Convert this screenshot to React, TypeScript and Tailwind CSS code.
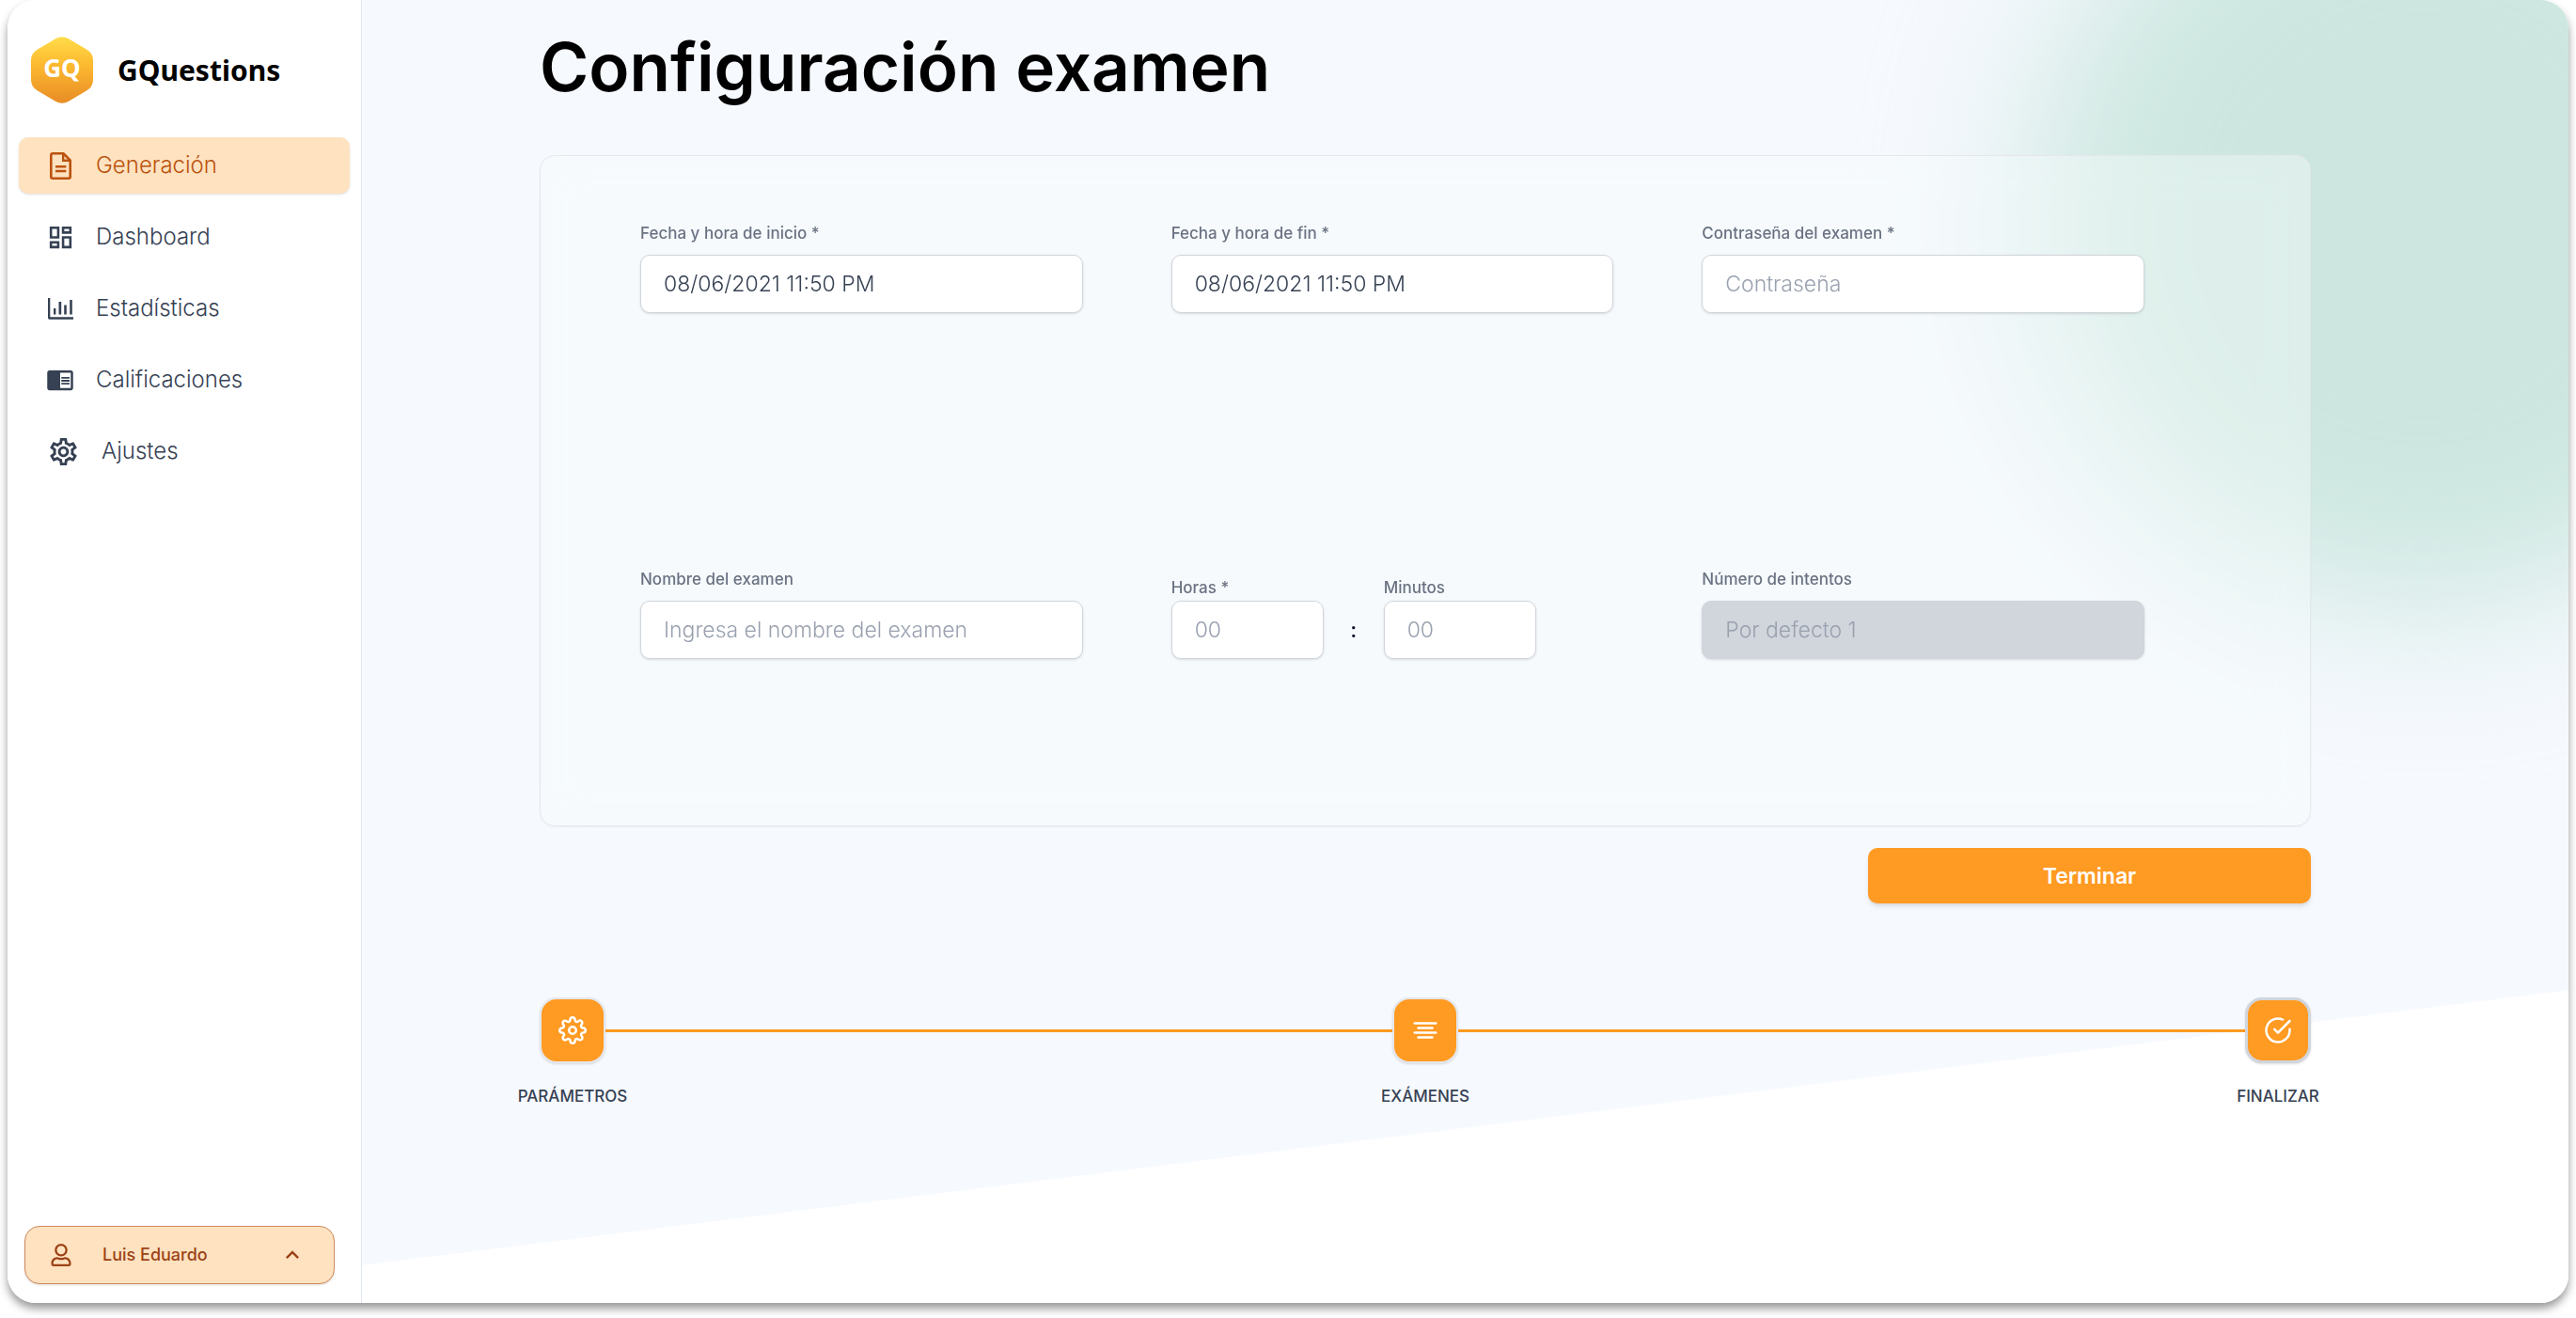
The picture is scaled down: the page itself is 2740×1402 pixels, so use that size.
import React, { useId } from "react";
import type { IconType } from "react-icons";
import { FaRegUser } from "react-icons/fa";
import { FiAlignCenter, FiCheckCircle, FiSettings } from "react-icons/fi";
import { MdChromeReaderMode, MdExpandLess, MdOutlineDashboard, MdOutlineSettings } from "react-icons/md";

function Logo() {
  return (
    <svg viewBox="0 0 66 71" className="h-[71px] w-[66px]" aria-hidden="true">
      <defs>
        <linearGradient id="logo-fill" x1="0" y1="0" x2="0" y2="1">
          <stop offset="0" stopColor="#ffdc4a" />
          <stop offset="0.4" stopColor="#fdbb30" />
          <stop offset="1" stopColor="#e88c25" />
        </linearGradient>
      </defs>
      <path
        d="M26 2.2Q33 -1.6 40 2.2L59 13.4Q66 17.6 66 25V46Q66 53.4 59 57.6L40 68.8Q33 72.6 26 68.8L7 57.6Q0 53.4 0 46V25Q0 17.6 7 13.4Z"
        fill="url(#logo-fill)"
      />
      <text
        x="33"
        y="43"
        textAnchor="middle"
        fill="#ffffff"
        fontFamily="'Noto Sans', sans-serif"
        fontWeight="700"
        fontSize="26"
      >
        GQ
      </text>
    </svg>
  );
}

function DocumentIcon() {
  return (
    <svg viewBox="0 0 23 29" className="h-[29px] w-[23px]" fill="none" stroke="currentColor" aria-hidden="true">
      <path d="M3 1.3H14.5L21.7 8.5V26Q21.7 27.7 20 27.7H3Q1.3 27.7 1.3 26V3Q1.3 1.3 3 1.3Z" strokeWidth="2.6" />
      <path d="M14.2 1.5V8.8H21.5" strokeWidth="2.4" />
      <path d="M6 15.2H17.4M6 20H17.4" strokeWidth="2.6" />
    </svg>
  );
}

function ChartIcon() {
  return (
    <svg viewBox="0 0 27 23" className="h-[23px] w-[27px]" fill="currentColor" aria-hidden="true">
      <path d="M0 0H2.3V20.3H27V22.7H1.5Q0 22.7 0 21Z" />
      <path d="M6 11H8.4V17.6H6ZM11.5 4H14.2V17.6H11.5ZM17.2 7.5H19.8V17.6H17.2ZM23.2 2H25.8V17.6H23.2Z" />
    </svg>
  );
}

type NavItem = { label: string; icon: React.ReactNode; active?: boolean; wide?: boolean };

const navItems: NavItem[] = [
  { label: "Generación", icon: <DocumentIcon />, active: true },
  { label: "Dashboard", icon: <MdOutlineDashboard className="size-[31px] shrink-0" /> },
  { label: "Estadísticas", icon: <ChartIcon /> },
  { label: "Calificaciones", icon: <MdChromeReaderMode className="size-[30px] shrink-0" /> },
  { label: "Ajustes", icon: <MdOutlineSettings className="size-[35px] shrink-0" />, wide: true },
];

function Sidebar() {
  return (
    <aside className="flex w-[377px] shrink-0 flex-col border-r border-slate-200 bg-white">
      <div className="flex items-center gap-[26px] pt-[39px] pl-[25px]">
        <Logo />
        <span className="font-['Noto_Sans'] text-[30px] leading-10 font-bold text-black">GQuestions</span>
      </div>
      <nav className="mt-9 flex flex-col gap-4 pr-3 pl-3">
        {navItems.map((item) => (
          <a
            key={item.label}
            href="#"
            className={
              item.active
                ? "flex h-[60px] items-center gap-5 rounded-[10px] bg-[#ffe2c0] pl-[26px] text-[#bb520c] shadow"
                : "flex h-[60px] items-center gap-5 rounded-[10px] pl-[26px] text-gray-700"
            }
          >
            <span className={item.wide ? "flex w-[42px] justify-center" : "flex w-9 justify-center"}>{item.icon}</span>
            <span className="text-[24px] leading-8 font-light">{item.label}</span>
          </a>
        ))}
      </nav>
      <button
        type="button"
        className="mt-auto mr-7 mb-5 ml-[18px] flex h-[62px] items-center rounded-2xl border border-[#cf8c5e] bg-[#ffe2c0] pr-[30px] pl-[26px] text-[#9c4216] shadow"
      >
        <FaRegUser className="size-6" />
        <span className="ml-8 text-[18px] leading-6 font-medium">Luis Eduardo</span>
        <MdExpandLess className="ml-auto size-7" />
      </button>
    </aside>
  );
}

type FieldProps = {
  label: string;
  value?: string;
  placeholder?: string;
  disabled?: boolean;
  type?: string;
  compact?: boolean;
};

function Field({ label, value, placeholder, disabled, type = "text", compact }: FieldProps) {
  const id = useId();
  return (
    <div className={compact ? "flex w-[162px] flex-col gap-0.5" : "flex flex-col gap-[11px]"}>
      <label htmlFor={id} className="text-[17px] leading-6 font-medium text-gray-500">
        {label}
      </label>
      <input
        id={id}
        type={type}
        defaultValue={value}
        placeholder={placeholder}
        disabled={disabled}
        className="h-[62px] w-full rounded-[10px] border border-gray-300 bg-white px-6 text-[23px] leading-8 font-light text-gray-700 shadow placeholder:text-gray-400 disabled:bg-gray-300"
      />
    </div>
  );
}

const steps: { label: string; icon: IconType; current?: boolean }[] = [
  { label: "PARÁMETROS", icon: FiSettings },
  { label: "EXÁMENES", icon: FiAlignCenter },
  { label: "FINALIZAR", icon: FiCheckCircle, current: true },
];

function Stepper() {
  return (
    <ol className="mt-[100px] flex items-start">
      {steps.map(({ label, icon: Icon, current }, index) => (
        <React.Fragment key={label}>
          {index > 0 && <li aria-hidden="true" className="mt-[34px] h-[3px] flex-1 bg-[#ff9a22]" />}
          <li className="flex w-[70px] flex-col items-center gap-[23px]">
            <button
              type="button"
              aria-label={label}
              className={
                current
                  ? "flex size-[70px] items-center justify-center rounded-[18px] border-3 border-gray-300 bg-[#ff9a22] text-white shadow"
                  : "flex size-[70px] items-center justify-center rounded-[18px] border-2 border-gray-200 bg-[#ff9a22] text-white shadow"
              }
            >
              <Icon className="size-[30px]" />
            </button>
            <span className="text-[17px] leading-6 font-medium whitespace-nowrap text-gray-700">{label}</span>
          </li>
        </React.Fragment>
      ))}
    </ol>
  );
}

function Backdrop() {
  return (
    <div aria-hidden="true" className="absolute inset-0 overflow-hidden">
      <div className="absolute -top-[190px] -right-[265px] size-[840px] rounded-full bg-[#cde7e0] blur-[80px]" />
      <svg viewBox="0 0 100 100" preserveAspectRatio="none" className="absolute inset-0 size-full">
        <polygon points="0,97.1 100,76 100,100 0,100" fill="#ffffff" />
      </svg>
    </div>
  );
}

export default function App() {
  return (
    <div className="flex min-h-screen bg-white px-2 pb-4 font-['Inter',sans-serif]">
      <div className="flex flex-1 overflow-hidden rounded-[30px] shadow-[0_6px_10px_rgba(0,0,0,0.4)]">
        <Sidebar />
        <main className="relative flex-1 bg-[#f6f9fe]">
          <Backdrop />
          <div className="relative pr-[274px] pl-[189px]">
            <h1 className="pt-[31px] text-[71px] leading-[80px] font-semibold text-black">Configuración examen</h1>
            <form onSubmit={(event) => event.preventDefault()}>
              <section className="mt-[54px] grid grid-cols-3 items-end gap-x-[94px] gap-y-[271px] rounded-2xl border border-gray-200 bg-[#f7fdfc]/40 pt-[70px] pr-[176px] pb-[177px] pl-[106px] shadow-xs backdrop-blur-xl">
                <Field label="Fecha y hora de inicio *" value="08/06/2021 11:50 PM" />
                <Field label="Fecha y hora de fin *" value="08/06/2021 11:50 PM" />
                <Field label="Contraseña del examen *" placeholder="Contraseña" type="password" />
                <Field label="Nombre del examen" placeholder="Ingresa el nombre del examen" />
                <div className="flex items-end">
                  <Field label="Horas *" placeholder="00" compact />
                  <span className="w-16 text-center text-[23px] leading-[62px] font-medium text-gray-900">:</span>
                  <Field label="Minutos" placeholder="00" compact />
                </div>
                <Field label="Número de intentos" placeholder="Por defecto 1" disabled />
              </section>
              <div className="mt-[23px] flex justify-end">
                <button
                  type="submit"
                  className="h-[59px] w-1/4 rounded-[10px] bg-[#ff9a22] text-[23px] leading-8 font-semibold text-white shadow-md"
                >
                  Terminar
                </button>
              </div>
            </form>
            <Stepper />
          </div>
        </main>
      </div>
    </div>
  );
}
